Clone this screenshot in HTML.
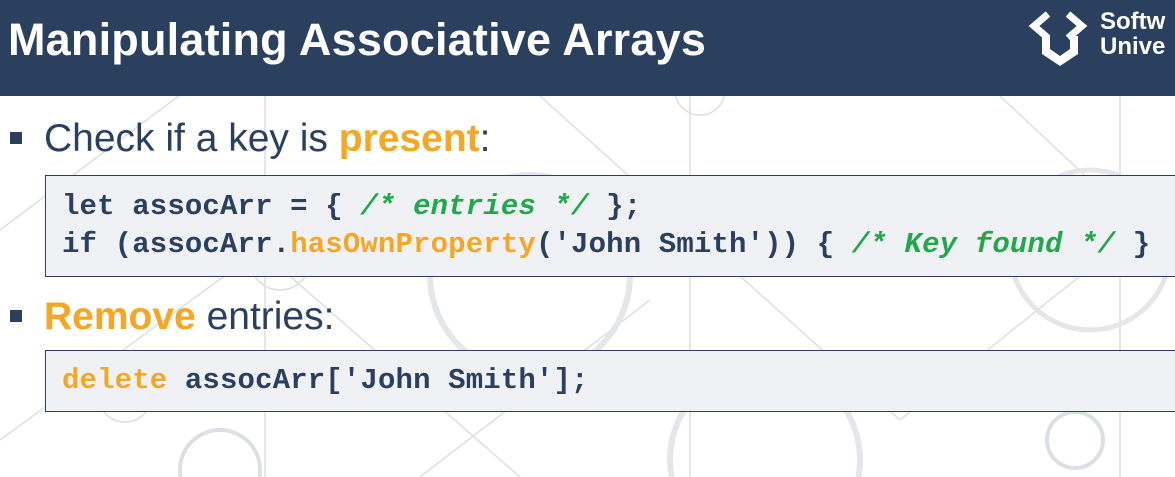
<!DOCTYPE html>
<html><head><meta charset="utf-8"><style>
*{margin:0;padding:0;box-sizing:border-box}
html,body{width:1175px;height:477px;overflow:hidden}
body{background:#fff;position:relative;font-family:"Liberation Sans",sans-serif}
.hdr{position:absolute;left:0;top:0;width:1175px;height:96px;background:#2b405f}
.title{position:absolute;left:8px;top:14px;color:#fff;font-size:45px;font-weight:bold;white-space:nowrap;letter-spacing:0.2px}
.b{position:absolute;color:#2b405f;font-size:39px;white-space:nowrap}
.b .sq{display:inline-block;width:12px;height:12px;background:#2b405f;position:absolute;left:-34px;top:15px}
.o{color:#f6a623;font-weight:bold}
.box{position:absolute;background:#eff1f5;border:1.5px solid #2b405f}
.code{position:absolute;font-family:"Liberation Mono",monospace;font-weight:bold;font-size:29px;letter-spacing:0.15px;color:#2b405f;white-space:pre;line-height:38px}
.g{color:#22a84a;font-style:italic}
.k{color:#f6a623}
</style></head><body>
<svg width="1175" height="477" style="position:absolute;left:0;top:0" fill="none" stroke="#dcdfe4" stroke-width="1.5">
<line x1="0" y1="230" x2="200" y2="80"/><line x1="0" y1="440" x2="260" y2="250"/>
<line x1="260" y1="250" x2="520" y2="477"/><line x1="540" y1="96" x2="900" y2="420"/>
<line x1="900" y1="420" x2="1175" y2="200"/><line x1="690" y1="96" x2="690" y2="477"/>
<line x1="265" y1="96" x2="265" y2="477"/><line x1="1120" y1="96" x2="1120" y2="477"/>
<line x1="420" y1="477" x2="650" y2="300"/><line x1="1000" y1="96" x2="1175" y2="260"/>
<circle cx="530" cy="275" r="100" stroke-width="6" stroke="#e4e6ea"/>
<circle cx="1090" cy="250" r="80" stroke-width="5" stroke="#e4e6ea"/>
<circle cx="765" cy="460" r="95" stroke-width="6" stroke="#e4e6ea"/>
<circle cx="125" cy="395" r="27"/><circle cx="280" cy="260" r="30"/>
<circle cx="880" cy="245" r="30"/><circle cx="1075" cy="440" r="28" stroke-width="4"/>
<circle cx="700" cy="90" r="25"/><circle cx="220" cy="470" r="40" stroke-width="4"/>
</svg>
<div class="hdr"></div>
<div class="title">Manipulating Associative Arrays</div>
<svg style="position:absolute;left:1028px;top:8px" width="70" height="62" viewBox="0 0 70 62">
<path d="M20 6 L6 18 L20 30" fill="none" stroke="#fff" stroke-width="7"/>
<path d="M40 6 L54 18 L40 30" fill="none" stroke="#fff" stroke-width="7"/>
<path d="M14 28 L14 46 L32 58 L50 46 L50 28 L42 28 L42 41 L32 48 L22 41 L22 28 Z" fill="#fff"/>
</svg>
<div style="position:absolute;left:1100px;top:9px;color:#fff;font-weight:bold;font-size:24px;line-height:25px">Softw<br>Unive</div>
<div class="b" style="left:44px;top:117px"><span class="sq"></span>Check if a key is <span class="o">present</span>:</div>
<div class="box" style="left:45px;top:175px;width:1135px;height:102px"></div>
<div class="code" style="left:62px;top:188px">let assocArr = { <span class="g">/* entries */</span> };
if (assocArr.<span class="k">hasOwnProperty</span>('John Smith')) { <span class="g">/* Key found */</span> }</div>
<div class="b" style="left:44px;top:295px"><span class="sq"></span><span class="o">Remove</span> entries:</div>
<div class="box" style="left:45px;top:350px;width:1135px;height:62px"></div>
<div class="code" style="left:62px;top:362px"><span class="k">delete</span> assocArr['John Smith'];</div>
</body></html>
